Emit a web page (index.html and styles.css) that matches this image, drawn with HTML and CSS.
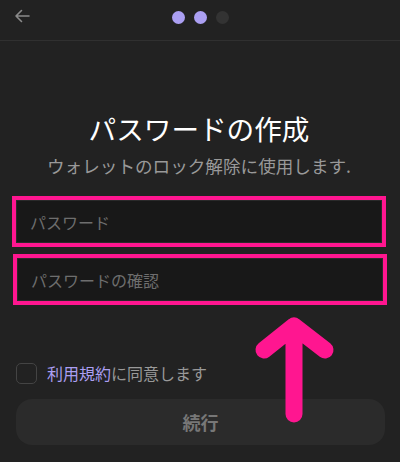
FILE: index.html
```html
<!DOCTYPE html>
<html>
<head>
    <meta charset="utf-8">
    <link rel="stylesheet" href="styles.css">
</head>
<body>
    <div class="page">
        <div class="header">
            <svg class="back" width="16" height="14" viewBox="0 0 16 14">
                <path d="M15 7H2M7.5 1.5L2 7l5.5 5.5" fill="none" stroke="#8a8a8a" stroke-width="1.6" stroke-linecap="round" stroke-linejoin="round"/>
            </svg>
            <div class="steps">
                <span class="dot active"></span>
                <span class="dot active"></span>
                <span class="dot"></span>
            </div>
            <div></div>
        </div>
        <div class="main">
            <h1 class="title">パスワードの作成</h1>
            <p class="subtitle">ウォレットのロック解除に使用します.</p>
            <input class="field" type="password" placeholder="パスワード">
            <input class="field field-confirm" type="password" placeholder="パスワードの確認">
        </div>
        <div class="footer">
            <label class="agree">
                <span class="check"></span>
                <span><span class="link">利用規約</span>に同意します</span>
            </label>
            <button class="continue">続行</button>
        </div>
        <svg class="pointer" width="90" height="120" viewBox="0 0 90 120">
            <path d="M44 104V16M14 40L44 16L75 40" fill="none" stroke="#ff1690" stroke-width="17" stroke-linecap="round" stroke-linejoin="round"/>
        </svg>
    </div>
</body>
</html>
```

FILE: styles.css
```css
html, body {
    margin: 0;
    background-color: #222222;
}
body {
    font-family: "Noto Sans CJK JP", "Noto Sans", sans-serif;
    color: #fff;
}
.page {
    position: relative;
    width: 400px;
    height: 462px;
    overflow: hidden;
}
.header {
    height: 41px;
    box-sizing: border-box;
    padding: 11px 14px 0;
    border-bottom: 1px solid #303030;
    display: grid;
    grid-template-columns: 1fr auto 1fr;
    align-items: start;
}
.back {
    margin-top: -2px;
}
.steps {
    display: flex;
    gap: 9px;
    margin-left: 1px;
}
.dot {
    width: 13px;
    height: 13px;
    border-radius: 50%;
    background-color: #333333;
}
.dot.active {
    background-color: #ab9ff2;
}
.main {
    padding: 0 14px 0 12px;
    display: flex;
    flex-direction: column;
}
.title {
    margin: 69px 0 0;
    font-size: 27.6px;
    font-weight: 400;
    line-height: 36px;
    text-align: center;
}
.subtitle {
    margin: 8px 0 18px;
    font-size: 17.6px;
    line-height: 24px;
    color: #999999;
    text-align: center;
}
.field {
    box-sizing: border-box;
    width: 374px;
    height: 51px;
    margin: 0;
    padding: 0 14px;
    border: 4px solid #ff1690;
    background-color: #181818;
    box-shadow: inset 0 0 0 1px #2a2a2a;
    font-family: inherit;
    font-size: 16px;
    color: #fff;
    outline: none;
}
.field::placeholder {
    color: #6e6e6e;
}
.field-confirm {
    margin-top: 7px;
    margin-left: 1px;
}
.footer {
    padding: 0 15px 0 16px;
}
.agree {
    display: flex;
    align-items: center;
    gap: 10px;
    margin-top: 57px;
    height: 22px;
    font-size: 16px;
    color: #999999;
}
.check {
    box-sizing: border-box;
    width: 21px;
    height: 21px;
    border: 1.5px solid #444444;
    border-radius: 5px;
}
.link {
    color: #ab9ff2;
}
.continue {
    display: block;
    width: 100%;
    height: 46px;
    margin-top: 15px;
    border: none;
    border-radius: 16px;
    background-color: #2b2b2b;
    font-family: inherit;
    font-size: 18px;
    font-weight: 700;
    color: #777777;
}
.pointer {
    position: absolute;
    left: 250px;
    top: 310px;
}
```
